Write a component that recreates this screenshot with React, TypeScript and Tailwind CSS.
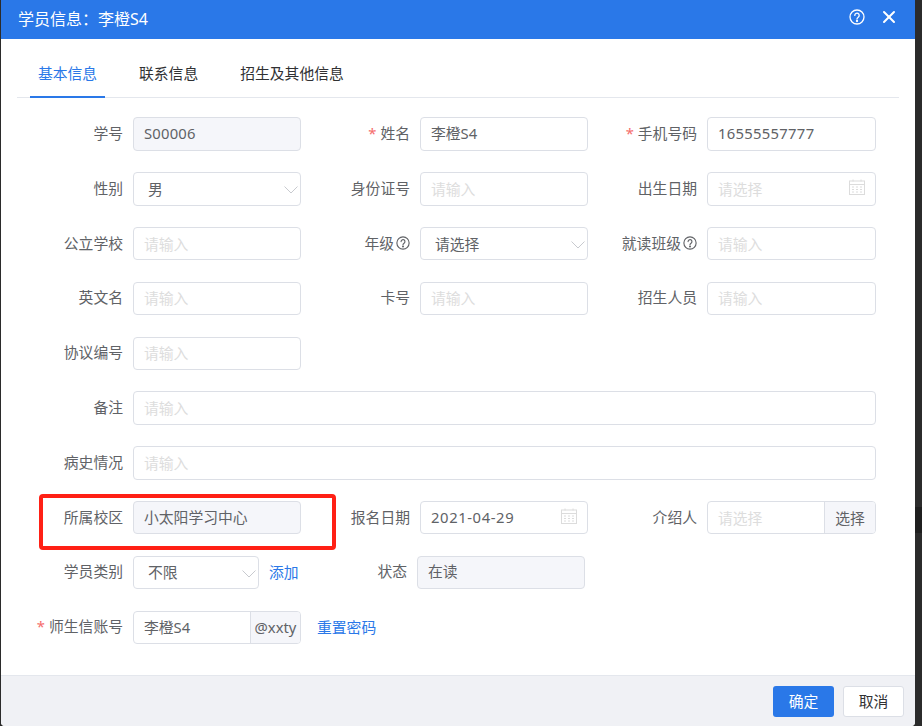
import type { ReactNode } from "react";
import { X } from "lucide-react";

const FONT = "[font-family:'Noto_Sans','Noto_Sans_CJK_SC',sans-serif]";

function HelpIcon({ size = 14 }: { size?: number }) {
  return (
    <svg width={size} height={size} viewBox="0 0 16 16" fill="none" stroke="currentColor" strokeWidth="1.3">
      <circle cx="8" cy="8" r="7" />
      <path d="M5.8 6.4a2.2 2.2 0 1 1 3.4 1.8C8.4 8.8 8 9.2 8 10" strokeLinecap="round" />
      <circle cx="8" cy="12" r="0.5" fill="currentColor" />
    </svg>
  );
}

function CalendarIcon() {
  return (
    <svg width="16" height="16" viewBox="0 0 16 16" fill="none" stroke="#dcdcdc" strokeWidth="1">
      <rect x="0.5" y="2" width="15" height="13.5" />
      <path d="M0.5 5.5h15M4 0.5v2M12 0.5v2" />
      <path d="M3 8h2M7 8h2M11 8h2M3 10.5h2M7 10.5h2M11 10.5h2M3 13h2M7 13h2M11 13h2" />
    </svg>
  );
}

function Label({ text, required, help }: { text: string; required?: boolean; help?: boolean }) {
  return (
    <div className="w-[105px] shrink-0 flex items-center justify-end pb-[2px] text-[#606266]">
      {required && <span className="text-[#f56c6c] mr-[4px]">*</span>}
      <span>{text}</span>
      {help && (
        <span className="ml-[2px] flex">
          <HelpIcon />
        </span>
      )}
    </div>
  );
}

function Box({ children, disabled, className = "" }: { children?: ReactNode; disabled?: boolean; className?: string }) {
  return (
    <div
      className={`h-[33.5px] flex items-center border border-[#dcdfe6] rounded-[4px] ${
        disabled ? "bg-[#f5f6fa]" : "bg-white"
      } ${className}`}
    >
      {children}
    </div>
  );
}

function Text({ value, className = "" }: { value: string; className?: string }) {
  return <span className={`px-[10px] pb-[2px] text-[#606266] ${className}`}>{value}</span>;
}

function Placeholder({ value = "请输入" }: { value?: string }) {
  return <span className="px-[10px] text-[#dddddd]">{value}</span>;
}

function Select({ value, width = "w-[168px]" }: { value: string; width?: string }) {
  return (
    <Box className={`${width} justify-between`}>
      <span className="pl-[14px] text-[#606266]">{value}</span>
      <svg width="14" height="8" viewBox="0 0 14 8" fill="none" stroke="#c8cacf" strokeWidth="1" className="mr-[2px] mt-[2px]">
        <path d="M0.5 0.5L7 7L13.5 0.5" />
      </svg>
    </Box>
  );
}

function DateBox({ value, width = "w-[168px]" }: { value?: string; width?: string }) {
  return (
    <Box className={`${width} justify-between`}>
      {value ? <Text value={value} className="tracking-[0.6px]" /> : <Placeholder value="请选择" />}
      <span className="mr-[10px] -mt-[4px] flex">
        <CalendarIcon />
      </span>
    </Box>
  );
}

function Field({ label, required, help, className = "", children }: { label?: string; required?: boolean; help?: boolean; className?: string; children?: ReactNode }) {
  return (
    <div className={`flex items-center gap-[10px] ${className}`}>
      {label ? <Label text={label} required={required} help={help} /> : null}
      {children}
    </div>
  );
}

const input = <Box className="w-[168px]"><Placeholder /></Box>;
const inputWide = <Box className="w-[169px]"><Placeholder /></Box>;

export default function App() {
  return (
    <div className={`w-[922px] h-[726px] bg-[#2b2b2b] overflow-hidden pl-px flex ${FONT} text-[14.8px]`}>
      <div className="relative w-[914px] h-[726px] shrink-0 bg-white rounded-b-[4px] flex flex-col overflow-hidden">
        <div className="h-[39px] shrink-0 bg-[#2a78e8] flex items-center justify-between pl-[17px] pr-[16px] text-white">
          <span className="text-[16px] -mt-[1px]">学员信息：李橙S4</span>
          <div className="flex items-center gap-[14px] -mt-[5px]">
            <HelpIcon size={16} />
            <X size={20} strokeWidth={2.4} />
          </div>
        </div>

        <div className="mx-[16px] mt-[18px] h-[41px] shrink-0 flex border-b border-[#e4e7ed] text-[#303133]">
          <div className="ml-[13px] w-[75px] h-[41px] text-center leading-[32px] text-[#2a78e8] border-b-2 border-[#2a78e8]">基本信息</div>
          <div className="ml-[34px] leading-[32px]">联系信息</div>
          <div className="ml-[42px] leading-[32px]">招生及其他信息</div>
        </div>

        <div className="pl-[17px] pt-[19.4px] flex flex-col gap-[21.3px] flex-1">
          <div className="grid grid-cols-[287px_287px_287px]">
            <Field label="学号"><Box disabled className="w-[168px]"><Text value="S00006" className="tracking-[0.2px]" /></Box></Field>
            <Field label="姓名" required><Box className="w-[168px]"><Text value="李橙S4" /></Box></Field>
            <Field label="手机号码" required><Box className="w-[169px]"><Text value="16555557777" className="tracking-[0.3px]" /></Box></Field>
          </div>
          <div className="grid grid-cols-[287px_287px_287px]">
            <Field label="性别"><Select value="男" /></Field>
            <Field label="身份证号">{input}</Field>
            <Field label="出生日期"><DateBox width="w-[169px]" /></Field>
          </div>
          <div className="grid grid-cols-[287px_287px_287px]">
            <Field label="公立学校">{input}</Field>
            <Field label="年级" help><Select value="请选择" /></Field>
            <Field label="就读班级" help>{inputWide}</Field>
          </div>
          <div className="grid grid-cols-[287px_287px_287px]">
            <Field label="英文名">{input}</Field>
            <Field label="卡号">{input}</Field>
            <Field label="招生人员">{inputWide}</Field>
          </div>
          <Field label="协议编号">{input}</Field>
          <Field label="备注"><Box className="w-[743px]"><Placeholder /></Box></Field>
          <Field label="病史情况"><Box className="w-[743px]"><Placeholder /></Box></Field>
          <div className="grid grid-cols-[287px_287px_287px]">
            <Field label="所属校区"><Box disabled className="w-[168px]"><Text value="小太阳学习中心" /></Box></Field>
            <Field label="报名日期"><DateBox value="2021-04-29" /></Field>
            <Field label="介绍人">
              <Box className="w-[169px] overflow-hidden">
                <div className="flex-1"><Placeholder value="请选择" /></div>
                <div className="w-[51px] h-full flex items-center justify-center bg-[#f5f6fa] border-l border-[#dcdfe6] text-[#606266]">选择</div>
              </Box>
            </Field>
          </div>
          <div className="grid grid-cols-[287px_287px_287px]">
            <Field label="学员类别">
              <div className="flex items-center gap-[10px]">
                <Select value="不限" width="w-[126px]" />
                <span className="text-[#2a78e8]">添加</span>
              </div>
            </Field>
            <Field label="状态" className="-ml-[3px]"><Box disabled className="w-[168px]"><Text value="在读" /></Box></Field>
          </div>
          <Field label="师生信账号" required>
            <div className="flex items-center gap-[16px]">
              <Box className="w-[168px] overflow-hidden">
                <div className="flex-1"><Text value="李橙S4" /></div>
                <div className="w-[50px] h-full flex items-center justify-center bg-[#f5f6fa] border-l border-[#dcdfe6] text-[#606266]">@xxty</div>
              </Box>
              <span className="text-[#2a78e8]">重置密码</span>
            </div>
          </Field>
        </div>

        <div className="h-[51px] shrink-0 bg-[#f0f1f5] border-t border-[#e4e7ed] flex items-center justify-end gap-[9px] pr-[11px]">
          <button className="w-[61px] h-[31px] rounded-[3px] bg-[#2a78e8] text-white">确定</button>
          <button className="w-[61px] h-[31px] rounded-[3px] bg-white border border-[#dcdfe6] text-[#303133]">取消</button>
        </div>

        <div className="absolute left-[38px] top-[494px] w-[297px] h-[56px] border-[4px] border-[#ff2015] rounded-[4px]" />
      </div>
      <div className="flex-1 flex flex-col">
        <div className="h-[507px]" />
        <div className="h-[26px] bg-[#1f1f1f]" />
      </div>
    </div>
  );
}
